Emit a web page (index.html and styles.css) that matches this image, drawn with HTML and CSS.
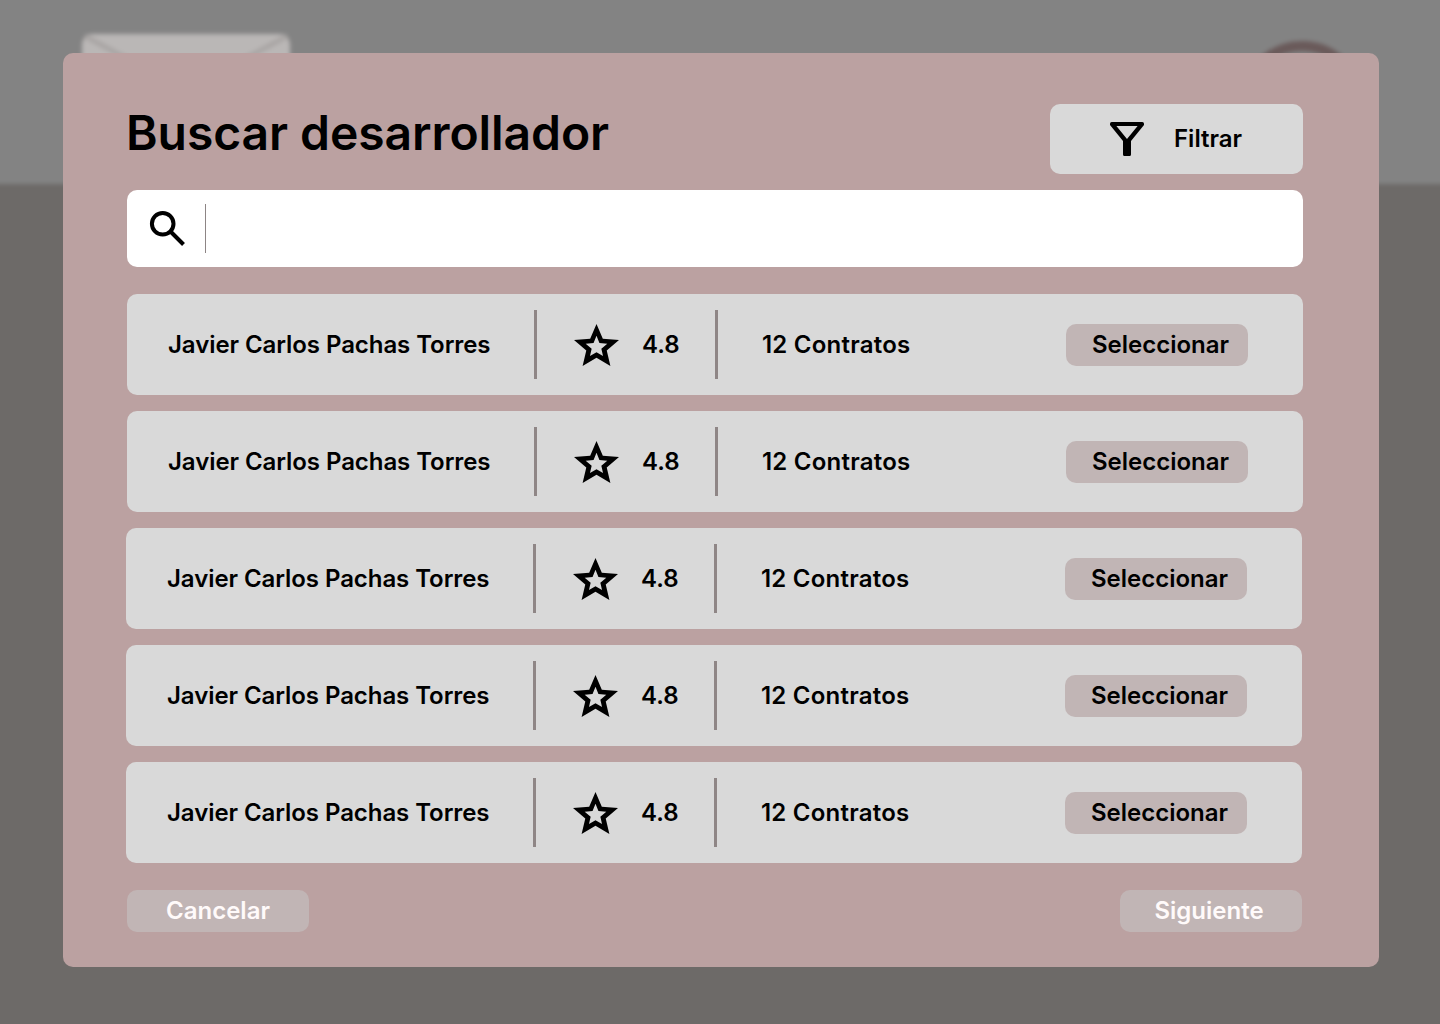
FILE: index.html
```html
<!DOCTYPE html>
<html lang="es">
<head>
<meta charset="utf-8">
<title>Buscar desarrollador</title>
<link rel="stylesheet" href="styles.css">
</head>
<body>
<svg class="sprite" aria-hidden="true">
  <symbol id="star" viewBox="2 2 20 19" preserveAspectRatio="none">
    <path d="M22 9.24l-7.19-.62L12 2 9.19 8.63 2 9.24l5.46 4.73L5.82 21 12 17.27 18.18 21l-1.63-7.03L22 9.24zM12 14.8L9.1 16.5 9.85 13.2 7.2 10.9 10.7 10.6 12 7.3 13.3 10.6 16.8 10.9 14.15 13.2 14.9 16.5z"/>
  </symbol>
</svg>

<div class="backdrop" aria-hidden="true">
  <div class="backdrop-header">
    <svg class="backdrop-logo" viewBox="0 0 208 120"><rect width="208" height="120" rx="10" fill="#bab7b6"/><path d="M3 2L104 57L205 2" fill="none" stroke="#a9a5a4" stroke-width="5"/></svg>
    <div class="backdrop-avatar"></div>
  </div>
</div>

<main class="modal">
  <header class="modal-header">
    <h1 class="title">Buscar desarrollador</h1>
    <button class="filter">
      <svg class="filter-icon" viewBox="0 0 34 34"><path fill-rule="evenodd" d="M1.7 0H32.3Q34 0 34 1.7V3L21 19V32.5Q21 34 19.5 34H14.5Q13 34 13 32.5V19L0 3V1.7Q0 0 1.7 0ZM6.4 4L17 17L27.6 4Z"/></svg>
      <span>Filtrar</span>
    </button>
  </header>

  <div class="search">
    <svg class="search-icon" viewBox="0 0 48 48"><path d="M26.5 26.5L39.5 39.5" fill="none" stroke="#000" stroke-width="4"/><circle cx="18.7" cy="18.7" r="10.8" fill="none" stroke="#000" stroke-width="4"/></svg>
    <span class="search-divider"></span>
  </div>

  <section class="list">
    <article class="row">
      <span class="name">Javier Carlos Pachas Torres</span>
      <div class="rating"><svg class="star"><use href="#star"/></svg><span>4.8</span></div>
      <span class="contracts">12 Contratos</span>
      <button class="button">Seleccionar</button>
    </article>
    <article class="row">
      <span class="name">Javier Carlos Pachas Torres</span>
      <div class="rating"><svg class="star"><use href="#star"/></svg><span>4.8</span></div>
      <span class="contracts">12 Contratos</span>
      <button class="button">Seleccionar</button>
    </article>
    <article class="row row-shifted">
      <span class="name">Javier Carlos Pachas Torres</span>
      <div class="rating"><svg class="star"><use href="#star"/></svg><span>4.8</span></div>
      <span class="contracts">12 Contratos</span>
      <button class="button">Seleccionar</button>
    </article>
    <article class="row row-shifted">
      <span class="name">Javier Carlos Pachas Torres</span>
      <div class="rating"><svg class="star"><use href="#star"/></svg><span>4.8</span></div>
      <span class="contracts">12 Contratos</span>
      <button class="button">Seleccionar</button>
    </article>
    <article class="row row-shifted">
      <span class="name">Javier Carlos Pachas Torres</span>
      <div class="rating"><svg class="star"><use href="#star"/></svg><span>4.8</span></div>
      <span class="contracts">12 Contratos</span>
      <button class="button">Seleccionar</button>
    </article>
  </section>

  <footer class="actions">
    <button class="button button-light">Cancelar</button>
    <button class="button button-light button-next">Siguiente</button>
  </footer>
</main>
</body>
</html>
```
FILE: styles.css
```css
* {
  box-sizing: border-box;
}

body {
  margin: 0;
  width: 1440px;
  height: 1024px;
  padding: 53px 61px 57px 63px;
  overflow: hidden;
  background: #6d6a68;
  font: 600 24px/29px Inter, "Liberation Sans", sans-serif;
  color: #000;
}

.sprite {
  position: absolute;
  width: 0;
  height: 0;
}

/* Blurred page behind the dialog */
.backdrop {
  position: absolute;
  inset: -20px;
  overflow: hidden;
  filter: blur(2px);
  background: #6d6a68;
}

.backdrop-header {
  display: flex;
  justify-content: space-between;
  height: 204px;
  padding: 54px 96px 0 101.5px;
  background: #838383;
}

.backdrop-logo {
  width: 208px;
  height: 120px;
}

.backdrop-avatar {
  width: 124px;
  height: 124px;
  margin: 7px 0 0;
  border: 10px solid #6a5a5a;
  border-radius: 50%;
}

.modal {
  position: relative;
  height: 914px;
  padding: 51px 76px 35px 64px;
  border-radius: 10px;
  background: #bba1a1;
}

.modal-header {
  display: flex;
  justify-content: space-between;
  height: 70px;
}

.title {
  margin: 0 0 0 -1px;
  font-size: 48px;
  line-height: 58px;
  font-weight: 600;
  letter-spacing: -0.07px;
}

button {
  border: 0;
  font: inherit;
  color: inherit;
}

.filter {
  display: flex;
  align-items: center;
  gap: 30px;
  width: 253px;
  padding: 0 0 0 60px;
  border-radius: 10px;
  background: #d9d9d9;
}

.filter span {
  padding-bottom: 2px;
}

.filter-icon {
  width: 34px;
  height: 34px;
}

.search {
  display: flex;
  align-items: center;
  height: 77px;
  margin-top: 16px;
  padding-left: 17px;
  border-radius: 10px;
  background: #fff;
}

.search-icon {
  width: 48px;
  height: 48px;
}

.search-divider {
  width: 1px;
  height: 49px;
  margin-left: 13px;
  background: #8d8585;
}

.list {
  display: flex;
  flex-direction: column;
  gap: 16px;
  margin-top: 27px;
}

.row {
  display: flex;
  align-items: center;
  height: 101px;
  padding: 0 55px 0 41px;
  border-radius: 10px;
  background: #d9d9d9;
}

.row-shifted {
  margin: 0 1px 0 -1px;
}

.name {
  width: 366px;
  letter-spacing: -0.07px;
  white-space: nowrap;
}

.rating {
  display: flex;
  align-items: center;
  gap: 23px;
  width: 184px;
  height: 69px;
  padding-left: 37px;
  border: solid #8f8686;
  border-width: 0 3px;
}

.star {
  width: 45px;
  height: 42px;
}

.contracts {
  margin-left: 44px;
  letter-spacing: 0.22px;
}

.button {
  width: 182px;
  height: 42px;
  margin-left: auto;
  padding: 0 0 0 7px;
  border-radius: 10px;
  background: #c1b5b5;
}

.actions {
  display: flex;
  justify-content: space-between;
  margin: 27px 1px 0 0;
}

.button-light {
  margin: 0;
  padding: 0 0 2px;
  color: #fffafa;
}

.button-next {
  padding-right: 4px;
}
```
